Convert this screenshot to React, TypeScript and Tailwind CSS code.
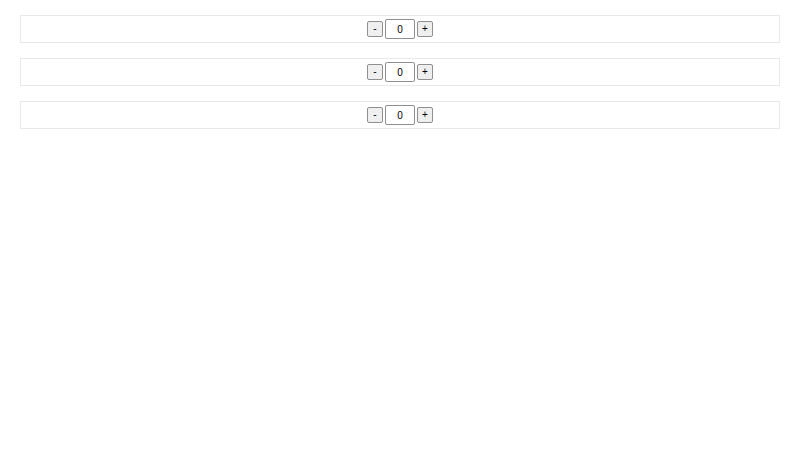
import React from "react";

function Row() {
  return (
    <div className="h-[28px] border border-[#e8e8e8] flex items-center justify-center gap-[2px] font-['Liberation_Sans',Arial,sans-serif]">
      <button className="w-[16px] h-[16px] bg-[#efefef] border border-[#8f8f8f] rounded-[2px] text-[10px] leading-none text-black flex items-center justify-center">-</button>
      <div className="w-[30px] h-[20px] border border-[#8f8f8f] rounded-[2px] bg-white text-[10px] text-black flex items-center justify-center">0</div>
      <button className="w-[16px] h-[16px] bg-[#efefef] border border-[#8f8f8f] rounded-[2px] text-[10px] leading-none text-black flex items-center justify-center">+</button>
    </div>
  );
}

export default function App() {
  return (
    <div className="w-[800px] h-[450px] bg-white flex flex-col gap-[15px] pt-[15px] px-[20px]">
      <Row />
      <Row />
      <Row />
    </div>
  );
}
